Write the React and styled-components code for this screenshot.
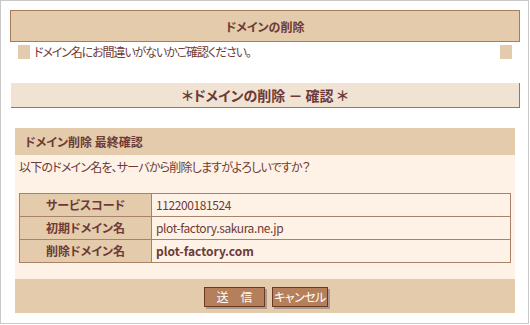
import React from 'react';
import styled, { createGlobalStyle } from 'styled-components';

const GlobalStyle = createGlobalStyle`
  body {
    margin: 0;
    background: #fff;
    font-family: "Noto Sans CJK JP", "Liberation Sans", sans-serif;
    font-size: 12px;
    color: #6e3a35;
    font-feature-settings: "palt";
  }
`;

const rows = [
  { label: 'サービスコード', value: '112200181524' },
  { label: '初期ドメイン名', value: 'plot-factory.sakura.ne.jp' },
  { label: '削除ドメイン名', value: 'plot-factory.com', strong: true },
];

function App() {
  return (
    <>
      <GlobalStyle />
      <Frame>
        <TitleBar>ドメインの削除</TitleBar>
        <NoteRow>
          <Square />
          <NoteText>ドメイン名にお間違いがないかご確認ください。</NoteText>
          <Square />
        </NoteRow>
        <SubTitle>＊ドメインの削除 － 確認 ＊</SubTitle>
        <Section>
          <SectionHead>ドメイン削除 最終確認</SectionHead>
          <SectionBody>
            <Lead>以下のドメイン名を、サーバから削除しますがよろしいですか？</Lead>
            <Table>
              <tbody>
                {rows.map((r) => (
                  <tr key={r.label}>
                    <LabelCell>{r.label}</LabelCell>
                    <ValueCell $strong={r.strong}>{r.value}</ValueCell>
                  </tr>
                ))}
              </tbody>
            </Table>
          </SectionBody>
          <Footer>
            <Button $wide>送　信</Button>
            <Button>キャンセル</Button>
          </Footer>
        </Section>
      </Frame>
    </>
  );
}

const Frame = styled.div`
  box-sizing: border-box;
  width: 529px;
  height: 324px;
  border: 1px solid #c8c8c8;
  padding: 9px 8px 0 9px;
`;

const TitleBar = styled.div`
  box-sizing: border-box;
  width: 510px;
  height: 32px;
  background: #e3cbab;
  border: 1px solid #a57c5e;
  display: flex;
  align-items: center;
  justify-content: center;
  font-weight: bold;
  font-size: 12px;
`;

const NoteRow = styled.div`
  display: flex;
  align-items: center;
  margin: 3px 0 0 8px;
  width: 494px;
  height: 14px;
`;

const Square = styled.span`
  width: 12px;
  height: 14px;
  background: #e3cbab;
  flex: none;
`;

const NoteText = styled.span`
  flex: 1;
  padding-left: 4px;
  font-size: 12px;
  line-height: 14px;
  letter-spacing: -1.1px;
`;

const SubTitle = styled.div`
  box-sizing: border-box;
  width: 509px;
  height: 25px;
  margin: 24px 0 0 1px;
  background: #f0e3d4;
  border-right: 1px solid #a07458;
  border-bottom: 1px solid #a07458;
  display: flex;
  align-items: center;
  justify-content: center;
  font-weight: bold;
  font-size: 14px;
`;

const Section = styled.div`
  width: 500px;
  margin: 20px 0 0 5px;
`;

const SectionHead = styled.div`
  height: 27px;
  background: #e3cbab;
  display: flex;
  align-items: center;
  padding-left: 10px;
  font-weight: bold;
  font-size: 12px;
`;

const SectionBody = styled.div`
  background: #fdf2e5;
  padding: 4px 4px 16px 4px;
`;

const Lead = styled.p`
  margin: 0 0 18px 0;
  line-height: 16px;
  letter-spacing: -0.8px;
`;

const Table = styled.table`
  width: 492px;
  border-collapse: collapse;
`;

const LabelCell = styled.td`
  width: 131px;
  height: 22px;
  padding: 0;
  background: #e3cbab;
  border: 1px solid #a8826a;
  text-align: center;
  font-weight: bold;
  line-height: 16px;
`;

const ValueCell = styled.td`
  height: 22px;
  padding: 0 0 0 4px;
  background: #fdf2e5;
  border: 1px solid #a8826a;
  line-height: 16px;
  font-weight: ${(p) => (p.$strong ? 'bold' : 'normal')};
  letter-spacing: ${(p) => (p.$strong ? '0' : '-0.4px')};
`;

const Footer = styled.div`
  height: 34px;
  background: #e3cbab;
  display: flex;
  align-items: center;
  justify-content: center;
  gap: 7px;
  padding-left: 2px;
`;

const Button = styled.button`
  box-sizing: border-box;
  height: 20px;
  width: ${(p) => (p.$wide ? '61px' : '56px')};
  padding: 0;
  margin-top: 1px;
  background: #b47f5a;
  border: 1px solid #6b3a1e;
  box-shadow: 2px 2px 0 #a89a92;
  color: #fff;
  font-family: "Noto Sans CJK JP", "Liberation Sans", sans-serif;
  font-size: 12px;
  line-height: 16px;
  font-feature-settings: "palt";
  letter-spacing: ${(p) => (p.$wide ? '0' : '-0.5px')};
  cursor: pointer;
`;

export default App;
